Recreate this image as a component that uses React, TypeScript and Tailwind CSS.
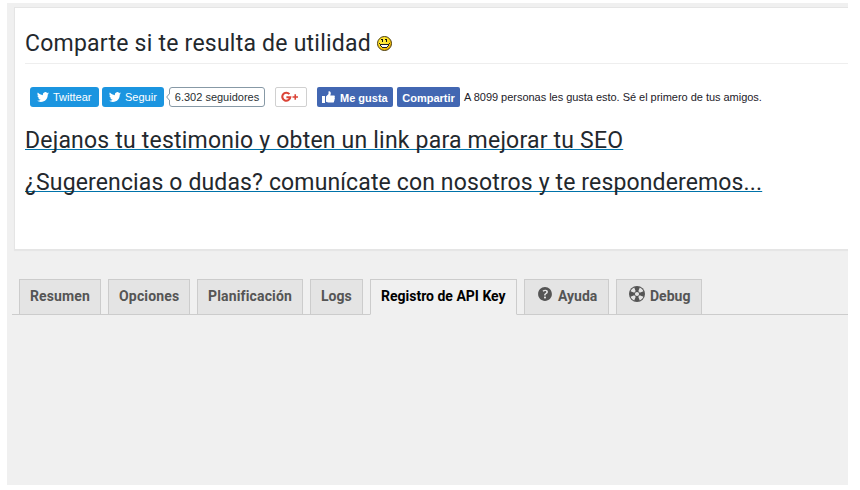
import type { ReactNode } from 'react';

const sans = "font-['Liberation_Sans',Arial,sans-serif]";

function Bird() {
  return (
    <svg viewBox="0 0 24 20" className="h-[10px] w-[12px] shrink-0" fill="#fff">
      <path d="M24 2.6c-.9.4-1.8.7-2.8.8 1-.6 1.8-1.6 2.2-2.7-1 .6-2 1-3.1 1.2A4.9 4.9 0 0 0 11.9 6.400C7.800 6.200 4.200 4.200 1.700 1.200a4.900 4.900 0 0 0 1.500 6.600c-.8 0-1.600-.2-2.200-.6v.1c0 2.400 1.700 4.400 3.900 4.800-.7.2-1.500.2-2.200.1.600 2 2.400 3.400 4.600 3.400A9.900 9.900 0 0 1 0 17.600 13.900 13.900 0 0 0 7.500 19.800c9.100 0 14-7.500 14-14v-.6c1-.7 1.800-1.600 2.500-2.600z" />
    </svg>
  );
}

function Smiley() {
  return (
    <svg viewBox="0 0 15 15" className="ml-[6px] h-[15px] w-[15px] shrink-0">
      <defs>
        <radialGradient id="face" cx=".4" cy=".35" r=".65">
          <stop offset="0" stopColor="#fff04a" />
          <stop offset=".6" stopColor="#ffdf1c" />
          <stop offset="1" stopColor="#eca900" />
        </radialGradient>
      </defs>
      <circle cx="7.500" cy="7.500" r="7" fill="url(#face)" stroke="#4b3d10" strokeWidth="1" />
      <path d="M5 3h1v3H5zM9 3h1v3H9zM4 3h1v1H4zM8 3h1v1H8z" fill="#111" />
      <path d="M4 9h7v1h-1v1H5v-1H4z" fill="#fff" />
      <path d="M2 7h1v1H2zM12 7h1v1h-1zM3 8h9v1H3zM3 9h1v1H3zM11 9h1v1h-1zM4 10h1v1H4zM10 10h1v1h-1zM5 11h5v1H5z" fill="#222" />
    </svg>
  );
}

function Help() {
  return (
    <svg viewBox="2.900 2.900 14.200 14.200" className="mt-[-5px] mr-[6px] ml-[3px] h-[14px] w-[14px] shrink-0" fill="#555">
      <path d="M17 10c0-3.870-3.140-7-7-7-3.870 0-7 3.130-7 7s3.130 7 7 7c3.860 0 7-3.130 7-7zm-6.300 1.480H9.140v-.43c0-.38.080-.7.240-.98s.460-.57.880-.89c.41-.29.680-.53.810-.71.140-.18.200-.39.200-.62 0-.25-.09-.44-.28-.58-.19-.13-.45-.19-.79-.19-.58 0-1.250.19-2 .57l-.64-1.280c.87-.49 1.800-.74 2.770-.74.810 0 1.450.2 1.920.58.480.39.710.91.710 1.550 0 .43-.09.800-.29 1.110-.19.320-.57.670-1.110 1.060-.38.280-.61.490-.71.630-.1.150-.15.340-.15.570v.35zm-1.470 2.740c-.18-.17-.27-.42-.27-.73 0-.33.080-.58.260-.75s.43-.25.770-.25c.32 0 .57.090.75.260s.27.420.27.740c0 .3-.09.550-.27.720-.18.180-.43.270-.75.270-.33 0-.58-.09-.76-.26z" />
    </svg>
  );
}

function Lifebuoy() {
  return (
    <svg viewBox="2 2 16 16" className="mt-[-5px] mr-[5px] ml-[2px] h-[16px] w-[16px] shrink-0">
      <circle cx="10" cy="10" r="8" fill="#555" />
      <path
        d="M7.230 3.570 8.720 7.300c-.62.29-1.130.8-1.420 1.420L3.570 7.230c.71-1.640 2.020-2.950 3.660-3.660zM16.430 7.230 12.700 8.720c-.29-.62-.8-1.130-1.420-1.420l1.490-3.730c1.640.71 2.950 2.020 3.660 3.660zM3.570 12.770 7.300 11.280c.29.62.8 1.130 1.420 1.420l-1.490 3.730c-1.640-.71-2.950-2.020-3.660-3.660zM12.770 16.430 11.280 12.700c.62-.29 1.130-.8 1.420-1.420l3.730 1.490c-.71 1.640-2.020 2.950-3.660 3.660z"
        fill="#e4e4e4"
      />
      <circle cx="10" cy="10" r="2.100" fill="#e4e4e4" />
    </svg>
  );
}

function Thumb() {
  return (
    <svg viewBox="0 0 13 12" className="mb-[1px] mr-[5px] h-[12px] w-[13px] shrink-0" fill="#fff">
      <path d="M0 5h3v7H0zM4 5.500 6.500 3V.7C6.500.2 7 .1 7.400.2 8.500.5 9 1.600 8.700 3L8.300 4.600h3.500c1 0 1.400 1.200.7 1.800.7.500.5 1.500-.1 1.800.4.600.2 1.400-.4 1.700.3.900-.2 1.600-1 1.600H6.200L4 10.700z" />
    </svg>
  );
}

function Tab({ width, active, icon, tracking = '', children }: { width: string; active?: boolean; icon?: ReactNode; tracking?: string; children: ReactNode }) {
  return (
    <div
      className={`flex h-[36px] shrink-0 items-center border pb-px pl-[10px] text-[14px] font-bold whitespace-nowrap ${width} ${tracking} ${
        active ? 'border-[#ccc] border-b-[#f0f0f0] bg-[#f0f0f0] text-black' : 'border-[#ccc] bg-[#e4e4e4] text-[#555]'
      }`}
    >
      {icon}
      <span>{children}</span>
    </div>
  );
}

export default function App() {
  return (
    <div className="h-[490px] w-[860px] overflow-hidden bg-white pl-[7px] pt-[3px] font-['Roboto',sans-serif] text-[#23282d]">
      <main className="h-[482px] w-[841px] overflow-hidden bg-[#f0f0f0] pt-[4px]">
        <section className="ml-[7px] h-[243px] border border-r-0 border-[#e5e5e5] bg-white pl-[10px] shadow-[0_1px_1px_rgba(0,0,0,0.04)]">
          <h1 className="flex h-[56px] items-center border-b border-[#eee] pt-[16px] text-[23px] leading-[29px] tracking-[0.235px] whitespace-nowrap">
            Comparte si te resulta de utilidad
            <Smiley />
          </h1>
          <div className={`mt-[23px] flex h-[20px] pl-[5px] text-[11px] whitespace-nowrap ${sans}`}>
            <span className="flex w-[69px] items-center gap-[4px] rounded-[3px] bg-[#1b95e0] pl-[7px] text-white"><Bird />Twittear</span>
            <span className="ml-[3px] flex w-[62px] items-center gap-[4px] rounded-[3px] bg-[#1b95e0] pl-[7px] text-white"><Bird />Seguir</span>
            <span className="relative ml-[5px] flex w-[96px] items-center justify-center rounded-[3px] border border-[#8799a6] text-[#292f33]">
              <svg viewBox="0 0 4 8" className="absolute top-[5px] left-[-4px] h-[8px] w-[4px]">
                <path d="M4 0 .7 4 4 8" fill="#fff" stroke="#8799a6" />
              </svg>
              6.302 seguidores
            </span>
            <span className="ml-[10px] flex w-[32px] items-center rounded-[2px] border border-[#d0d0d0] pl-[5px]">
              <svg viewBox="0 0 18 12" className="h-[12px] w-[18px]" fill="none" stroke="#db4437">
                <path d="M8.400 3.200A4 4 0 1 0 9.300 6.200H5.400" strokeWidth="2.100" />
                <path d="M11.500 6h5.500M14.250 3.300v5.400" strokeWidth="1.600" />
              </svg>
            </span>
            <span className="ml-[10px] flex w-[76px] items-center rounded-[2px] bg-[#4267b2] pl-[5px] font-bold text-white"><Thumb /><span className="pt-[2px]">Me gusta</span></span>
            <span className="ml-[4px] flex w-[63px] items-center justify-center rounded-[2px] bg-[#4267b2] pt-[2px] font-bold text-white">Compartir</span>
            <span className="ml-[4px] flex items-center tracking-[-0.03px] text-[#1d2129]">A 8099 personas les gusta esto. Sé el primero de tus amigos.</span>
          </div>
          <h2 className="mt-[19px] text-[23px] leading-[30px] tracking-[0.205px] whitespace-nowrap underline decoration-[#0073aa] decoration-1 [text-decoration-skip-ink:none]">Dejanos tu testimonio y obten un link para mejorar tu SEO</h2>
          <h2 className="mt-[12px] text-[23px] leading-[30px] tracking-[0.135px] whitespace-nowrap underline decoration-[#0073aa] decoration-1 [text-decoration-skip-ink:none]">¿Sugerencias o dudas? comunícate con nosotros y te responderemos...</h2>
        </section>
        <nav className="mt-[29px] ml-[5px] flex h-[36px] gap-[7px] border-b border-[#ccc] pl-[7px]">
          <Tab width="w-[82px]" tracking="tracking-[0.13px]">Resumen</Tab>
          <Tab width="w-[82px]" tracking="tracking-[0.18px]">Opciones</Tab>
          <Tab width="w-[106px]" tracking="tracking-[0.15px]">Planificación</Tab>
          <Tab width="w-[53px]">Logs</Tab>
          <Tab width="w-[147px]" active>Registro de API Key</Tab>
          <Tab width="w-[85px]" icon={<Help />}>Ayuda</Tab>
          <Tab width="w-[86px]" icon={<Lifebuoy />}>Debug</Tab>
        </nav>
      </main>
    </div>
  );
}
